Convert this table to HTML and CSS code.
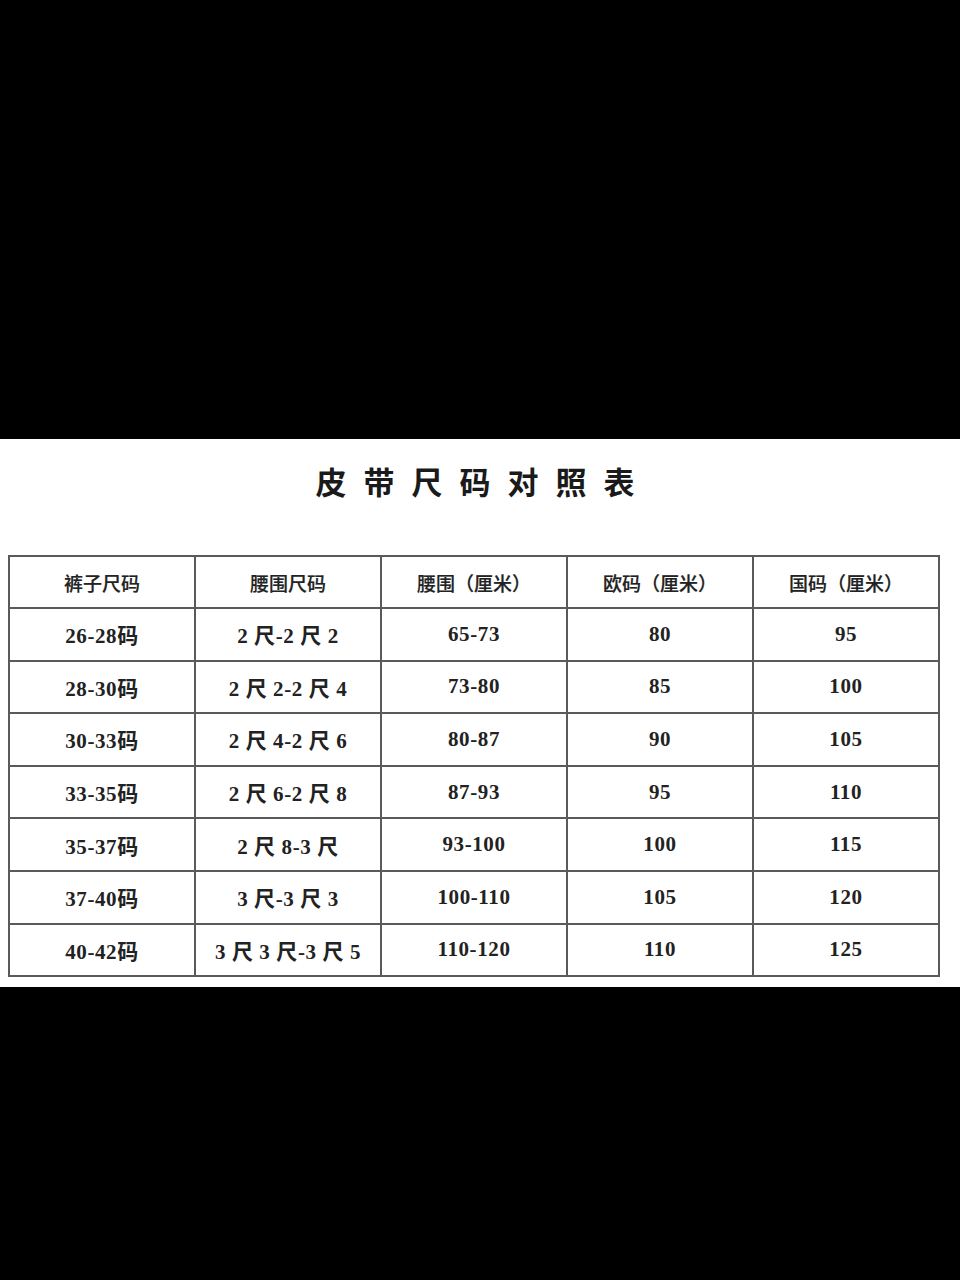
FILE: index.html
```html
<!DOCTYPE html>
<html lang="zh-CN">
<head>
<meta charset="utf-8">
<title>皮带尺码对照表</title>
<link rel="stylesheet" href="styles.css">
</head>
<body>
<div class="top"></div>
<section class="sheet">
  <h1 class="title">皮带尺码对照表</h1>
  <table class="size-table">
    <thead>
      <tr><th>裤子尺码</th><th>腰围尺码</th><th>腰围（厘米）</th><th>欧码（厘米）</th><th>国码（厘米）</th></tr>
    </thead>
    <tbody>
      <tr><td>26-28码</td><td>2 尺-2 尺 2</td><td>65-73</td><td>80</td><td>95</td></tr>
      <tr><td>28-30码</td><td>2 尺 2-2 尺 4</td><td>73-80</td><td>85</td><td>100</td></tr>
      <tr><td>30-33码</td><td>2 尺 4-2 尺 6</td><td>80-87</td><td>90</td><td>105</td></tr>
      <tr><td>33-35码</td><td>2 尺 6-2 尺 8</td><td>87-93</td><td>95</td><td>110</td></tr>
      <tr><td>35-37码</td><td>2 尺 8-3 尺</td><td>93-100</td><td>100</td><td>115</td></tr>
      <tr><td>37-40码</td><td>3 尺-3 尺 3</td><td>100-110</td><td>105</td><td>120</td></tr>
      <tr><td>40-42码</td><td>3 尺 3 尺-3 尺 5</td><td>110-120</td><td>110</td><td>125</td></tr>
    </tbody>
  </table>
</section>
<div class="bottom"></div>
</body>
</html>
```
FILE: styles.css
```css
html, body {
  margin: 0;
  padding: 0;
  background: #000;
}
body {
  width: 960px;
  height: 1280px;
  overflow: hidden;
  font-family: "Liberation Serif", "Noto Sans CJK SC", serif;
  color: #1e1e1e;
}
.top {
  height: 439px;
  background: #000;
}
.sheet {
  background: #fff;
  height: 548px;
  padding-top: 1px;
  box-sizing: border-box;
}
.title {
  margin: 21px 0 0 0;
  text-align: center;
  font-family: "Noto Sans CJK SC", sans-serif;
  font-weight: 700;
  font-size: 31px;
  line-height: 40px;
  letter-spacing: 17px;
  padding-left: 7px;
  color: #1a1a1a;
}
.size-table {
  margin: 54px 0 0 8px;
  width: 932px;
  border-collapse: collapse;
  table-layout: fixed;
}
.size-table th,
.size-table td {
  border: 2px solid #5a5a5a;
  text-align: center;
  padding: 0;
  color: #222;
}
.size-table th {
  height: 50px;
  font-family: "Noto Sans CJK SC", sans-serif;
  font-weight: 500;
  font-size: 19px;
  -webkit-text-stroke: 0.2px #222;
}
.size-table td {
  height: 50.6px;
  font-weight: 700;
  font-size: 21px;
  letter-spacing: 0.6px;
  font-family: "Liberation Serif", "Noto Sans CJK SC", serif;
}
.bottom {
  background: #000;
  height: 293px;
}
```
